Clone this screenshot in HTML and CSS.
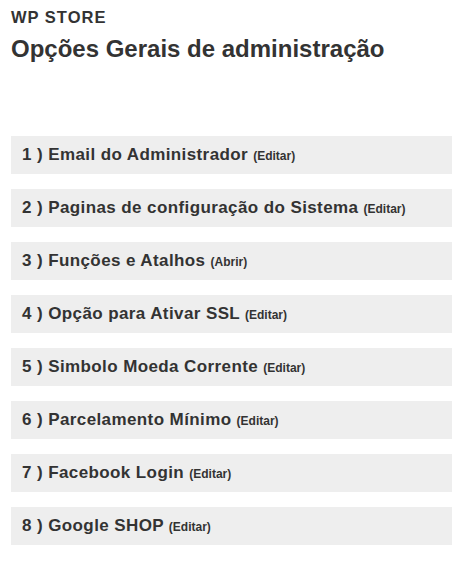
FILE: index.html
```html
<!DOCTYPE html>
<html lang="pt">
<head>
<meta charset="utf-8">
<link rel="stylesheet" href="styles.css">
</head>
<body>
<div class="page">
  <div class="brand">WP STORE</div>
  <h1 class="title">Opções Gerais de administração</h1>
  <div class="list">
    <div class="item">1 ) Email do Administrador <span class="action">(Editar)</span></div>
    <div class="item">2 ) Paginas de configuração do Sistema <span class="action">(Editar)</span></div>
    <div class="item">3 ) Funções e Atalhos <span class="action">(Abrir)</span></div>
    <div class="item">4 ) Opção para Ativar SSL <span class="action">(Editar)</span></div>
    <div class="item">5 ) Simbolo Moeda Corrente <span class="action">(Editar)</span></div>
    <div class="item">6 ) Parcelamento Mínimo <span class="action">(Editar)</span></div>
    <div class="item">7 ) Facebook Login <span class="action">(Editar)</span></div>
    <div class="item">8 ) Google SHOP <span class="action">(Editar)</span></div>
  </div>
</div>
</body>
</html>
```
FILE: styles.css
```css
html, body {
  margin: 0;
  padding: 0;
  background: #fff;
}
.page {
  padding: 8px 0 0 11px;
  font-family: "Liberation Sans", Arial, sans-serif;
  color: #333;
}
.brand {
  font-weight: bold;
  font-size: 16.5px;
  line-height: 19px;
  letter-spacing: 1px;
}
.title {
  margin: 8px 0 0 0;
  font-size: 24px;
  line-height: 28px;
  font-weight: bold;
}
.list {
  margin-top: 73px;
  display: flex;
  flex-direction: column;
  gap: 15px;
}
.item {
  background: #eeeeee;
  height: 38px;
  line-height: 38px;
  padding-left: 11px;
  font-size: 17px;
  font-weight: bold;
  letter-spacing: 0.4px;
  white-space: pre;
}
.action {
  font-size: 12px;
  letter-spacing: 0;
}
```
